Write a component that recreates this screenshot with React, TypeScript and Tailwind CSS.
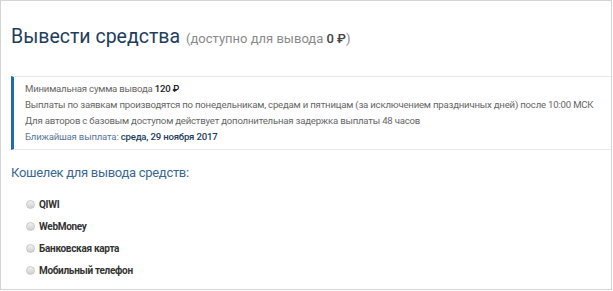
import React from 'react';

const wallets = ['QIWI', 'WebMoney', 'Банковская карта', 'Мобильный телефон'];

export default function App() {
  return (
    <div className="w-[613px] h-[291px] bg-white" style={{ fontFamily: 'Roboto, "Noto Sans", sans-serif' }}>
      <div className="w-[612px] h-[290px] border border-[#d4d4d4] flex flex-col">
        {/* Title */}
        <div className="pt-[22px] pl-[10px] h-[75px] flex items-baseline">
          <h1 className="text-[19.5px] leading-[28px] text-[#1e3d5c]">Вывести средства</h1>
          <span className="ml-[6px] text-[13px] text-[#8a8a8a]">
            (доступно для вывода <b className="text-[#444] font-medium">0 ₽</b>)
          </span>
        </div>

        {/* Info box */}
        <div className="ml-[10px] border-y border-[#e8e8e8] border-l-[3px] border-l-[#1c6ab8] pl-[11px] pt-[4px] pb-[4px] text-[9.6px] tracking-[-0.2px] leading-[16px] text-[#666]">
          <p>
            Минимальная сумма вывода <b className="font-medium text-[#222]">120 ₽</b>
          </p>
          <p className="whitespace-nowrap">Выплаты по заявкам производятся по понедельникам, средам и пятницам (за исключением праздничных дней) после 10:00 МСК</p>
          <p>Для авторов с базовым доступом действует дополнительная задержка выплаты 48 часов</p>
          <p className="text-[#5b7896]">
            Ближайшая выплата: <b className="font-medium text-[#1e3d5c]">среда, 29 ноября 2017</b>
          </p>
        </div>

        {/* Wallets */}
        <h2 className="mt-[13px] pl-[10px] text-[13px] leading-[20px] text-[#3a6890] tracking-[-0.3px]">Кошелек для вывода средств:</h2>
        <div className="mt-[13px] pl-[25px] flex flex-col gap-[6px]">
          {wallets.map(w => (
            <label key={w} className="flex items-center h-[16px] gap-[4px] text-[10px] tracking-[-0.3px] font-bold text-[#333]">
              <span className="w-[9px] h-[9px] rounded-full border border-[#c8c8c8] bg-gradient-to-b from-[#f2f2f2] to-[#cfcfcf]" />
              {w}
            </label>
          ))}
        </div>
      </div>
    </div>
  );
}
